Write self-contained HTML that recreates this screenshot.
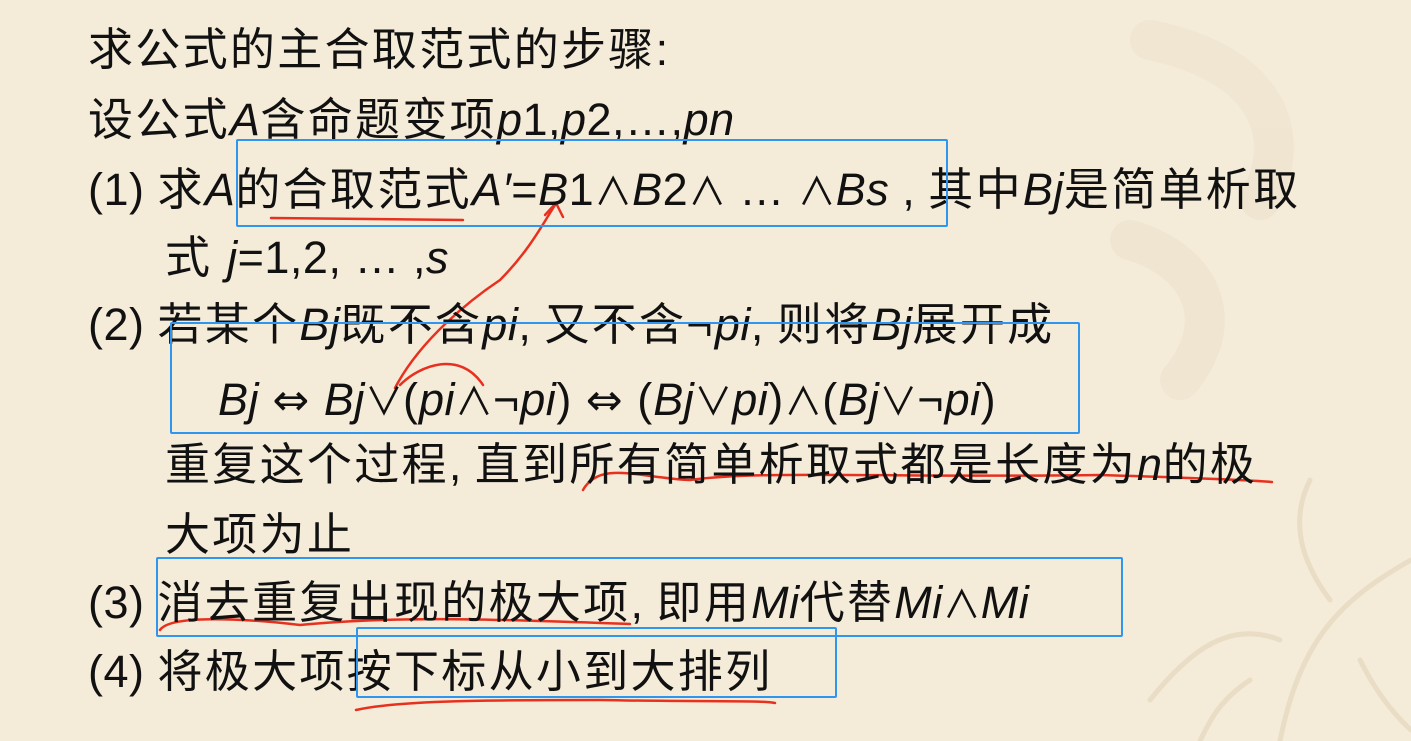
<!DOCTYPE html>
<html><head><meta charset="utf-8"><style>
html,body{margin:0;padding:0}
body{width:1411px;height:741px;overflow:hidden;position:relative;
background:#f4ebd9;
font-family:"Liberation Sans","Noto Sans CJK SC",sans-serif;color:#111;}
.l{position:absolute;font-size:45px;line-height:50px;white-space:nowrap;letter-spacing:2.3px}
i,.n{font-style:italic;letter-spacing:0.5px}
.n{font-style:normal}
.s{font-size:38px;letter-spacing:0}
.a{font-family:"DejaVu Sans",sans-serif;font-size:44px}
.b{position:absolute;border:2.5px solid #2f96f0;border-radius:2px}
</style></head><body>
<svg style="position:absolute;left:0;top:0" width="1411" height="741">
<g stroke="#e2d4b8" stroke-width="5" fill="none" opacity="0.6" stroke-linecap="round">
<path d="M1411 560 C1340 600 1300 640 1280 741"/>
<path d="M1330 600 C1300 560 1290 520 1310 480"/>
<path d="M1280 640 C1230 620 1190 650 1150 700"/>
<path d="M1360 660 C1380 700 1400 720 1411 730"/>
<path d="M1250 680 C1220 700 1210 720 1200 741"/>
</g>
<g stroke="#ece1cb" stroke-width="40" fill="none" opacity="0.5" stroke-linecap="round">
<path d="M1150 40 C1250 60 1300 120 1260 200"/>
<path d="M1130 240 C1200 260 1230 320 1180 380"/>
</g>
<g stroke="#e8301f" stroke-width="2.5" fill="none" stroke-linecap="round">
<path d="M271 218 L463 220"/>
<path d="M395 388 C420 340 470 300 500 280 C530 250 545 220 555 205"/>
<path d="M545 215 L556 203 L563 217"/>
<path d="M400 385 C420 365 460 350 483 385"/>
<path d="M583 490 C600 460 640 478 690 480 C760 470 900 478 1100 475 C1200 478 1250 480 1272 482"/>
<path d="M160 630 C170 615 240 618 300 625 C400 615 520 620 630 624"/>
<path d="M356 710 C400 700 500 700 600 700 C700 702 760 700 775 703"/>
</g>
</svg>
<div class="l" style="left:88px;top:25px">求公式的主合取范式的步骤:</div>
<div class="l" style="left:88px;top:95px">设公式<i>A</i>含命题变项<i>p</i><span class="n">1,</span><i>p</i><span class="n">2,…,</span><i>pn</i></div>
<div class="l" style="left:88px;top:165px"><span class="n">(1) </span>求<i>A</i>的合取范式<i>A′</i><span class="n">=</span><i>B</i><span class="n">1</span><span class="s">∧</span><i>B</i><span class="n">2</span><span class="s">∧</span><span class="n"> … </span><span class="s">∧</span><i>Bs</i><span class="n"> , </span>其中<i>Bj</i>是简单析取</div>
<div class="l" style="left:165px;top:233px">式 <i>j</i><span class="n">=1,2, … ,</span><i>s</i></div>
<div class="l" style="left:88px;top:300px"><span class="n">(2) </span>若某个<i>Bj</i>既不含<i>pi</i><span class="n">, </span>又不含¬<i>pi</i><span class="n">, </span>则将<i>Bj</i>展开成</div>
<div class="l" style="left:218px;top:375px;letter-spacing:1px"><i>Bj</i> <span class="a">⇔</span> <i>Bj</i><span class="s">∨</span>(<i>pi</i><span class="s">∧</span>¬<i>pi</i>) <span class="a">⇔</span> (<i>Bj</i><span class="s">∨</span><i>pi</i>)<span class="s">∧</span>(<i>Bj</i><span class="s">∨</span>¬<i>pi</i>)</div>
<div class="l" style="left:165px;top:440px">重复这个过程<span class="n">, </span>直到所有简单析取式都是长度为<i>n</i>的极</div>
<div class="l" style="left:165px;top:510px">大项为止</div>
<div class="l" style="left:88px;top:578px"><span class="n">(3) </span>消去重复出现的极大项<span class="n">, </span>即用<i>Mi</i>代替<i>Mi</i><span class="s">∧</span><i>Mi</i></div>
<div class="l" style="left:88px;top:647px"><span class="n">(4) </span>将极大项按下标从小到大排列</div>
<div class="b" style="left:236px;top:139px;width:708px;height:84px"></div>
<div class="b" style="left:170px;top:322px;width:906px;height:108px"></div>
<div class="b" style="left:156px;top:557px;width:963px;height:76px"></div>
<div class="b" style="left:356px;top:627px;width:477px;height:67px"></div>
</body></html>
